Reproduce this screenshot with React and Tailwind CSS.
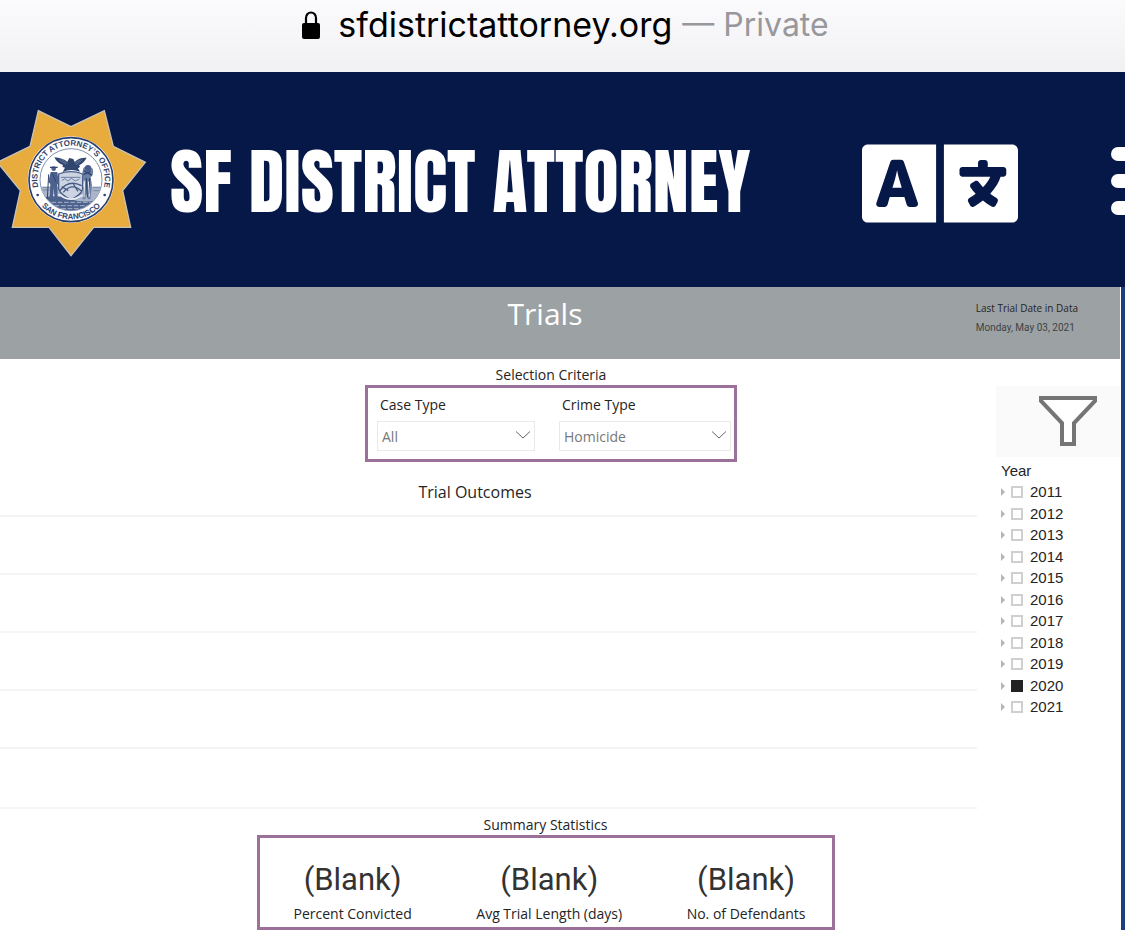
// App.jsx
import React, { useState } from "react";
import { FaLanguage } from "react-icons/fa";

const YEARS = [2011, 2012, 2013, 2014, 2015, 2016, 2017, 2018, 2019, 2020, 2021];

const STATS = ["Percent Convicted", "Avg Trial Length (days)", "No. of Defendants"];

const Badge = () => (
  <svg viewBox="0 36 444 456" className="mb-1 h-[152px] w-[148px] shrink-0" role="img" aria-label="District Attorney's Office, San Francisco">
    <defs>
      <path id="arcTop" d="M114 276 A101 101 0 1 1 312 276" />
      <path id="arcBottom" d="M102 298 A118 118 0 0 0 324 298" />
      <clipPath id="sealClip">
        <circle cx="213" cy="257" r="92" />
      </clipPath>
    </defs>
    <path
      d="M115 50 L213 98 L313 50 L340 157 L436 205 L368 290 L392 400 L281 400 L213 485 L147 400 L37 400 L61 290 L-8 205 L90 157 Z"
      fill="#e8ab3d"
      stroke="#c9c3b4"
      strokeWidth="4"
    />
    <circle cx="213" cy="257" r="130" fill="#fff" />
    <circle cx="213" cy="257" r="126" fill="none" stroke="#283e6f" strokeWidth="5" />
    <circle cx="213" cy="257" r="93" fill="#fff" stroke="#8290ad" strokeWidth="3" />
    <g fill="#31466f" fontFamily="'Liberation Sans', sans-serif" fontWeight="700" fontSize="24">
      <text textAnchor="middle">
        <textPath href="#arcTop" startOffset="50%">DISTRICT ATTORNEY’S OFFICE</textPath>
      </text>
      <text textAnchor="middle">
        <textPath href="#arcBottom" startOffset="50%">SAN FRANCISCO</textPath>
      </text>
    </g>
    <circle cx="113" cy="303" r="4" fill="#31466f" />
    <circle cx="314" cy="303" r="4" fill="#31466f" />
    <g clipPath="url(#sealClip)">
      {/* sea and ground */}
      <path d="M118 278 H308 V360 H118 Z" fill="#aab5ca" />
      <path d="M118 312 Q165 300 213 316 T308 310 V360 H118 Z" fill="#4c618c" />
      <path d="M135 325 H290 M145 335 H280 M165 344 H262" stroke="#a7b2c8" strokeWidth="3" strokeDasharray="14 5" />
      <path d="M128 280 H150 M128 288 H148 M278 280 H302 M280 290 H304" stroke="#5d7199" strokeWidth="2" />
      {/* shield */}
      <path d="M176 240 Q213 226 248 240 V285 Q242 305 213 316 Q184 305 176 285 Z" fill="#ccd4e1" stroke="#465b87" strokeWidth="4" />
      <path d="M183 250 H241 M186 260 l8 -6 l10 7 l10 -8 l12 8 l12 -6" stroke="#6c7fa5" strokeWidth="3" fill="none" />
      <path d="M180 290 Q205 255 245 275 M190 295 Q215 265 243 290 M185 278 l20 12 M220 270 l14 22" stroke="#465b87" strokeWidth="4" fill="none" />
      <path d="M160 304 Q180 298 190 310 Q215 322 238 308 Q255 300 265 308" stroke="#e9edf4" strokeWidth="5" fill="none" />
      {/* eagle */}
      <path d="M163 190 Q188 192 202 203 L208 192 L220 195 L224 204 Q236 190 260 191 Q252 207 237 214 Q244 219 234 223 L240 233 Q213 223 188 234 L195 221 Q184 219 189 213 Q171 207 163 190 Z" fill="#31466f" />
      <path d="M177 197 L198 211 M184 196 L202 209 M248 197 L228 212 M241 197 L225 208" stroke="#7f8fb0" strokeWidth="2" />
      {/* miner */}
      <circle cx="161" cy="224" r="7" fill="#4c618c" />
      <path d="M150 220 H173" stroke="#31466f" strokeWidth="4" />
      <path d="M152 234 H172 L177 270 L172 271 L173 316 H164 L161 280 L158 316 H149 L151 270 L145 264 Z" fill="#4c618c" />
      <path d="M146 241 L142 315 M157 238 L168 264" stroke="#31466f" strokeWidth="3" />
      {/* sailor with sheaf */}
      <path d="M250 222 Q264 206 278 224 Q283 240 272 250 L276 274 L271 316 H263 L261 280 L256 316 H248 L252 272 L248 252 Q245 236 250 222 Z" fill="#6c7fa5" />
      <circle cx="264" cy="222" r="9" fill="#465b87" />
      <path d="M252 230 L276 244 M250 242 L272 232 M259 252 L262 310 M269 252 L266 300" stroke="#31466f" strokeWidth="4" />
      <path d="M254 260 L252 310 M265 262 L268 308" stroke="#e9edf4" strokeWidth="3" />
    </g>
  </svg>
);

const Dropdown = ({ id, label, value, onChange, options, className }) => (
  <div className={className}>
    <label htmlFor={id} className="block pl-[3px] text-sm leading-5 text-[#252423]">
      {label}
    </label>
    <div className="relative mt-1.5">
      <select
        id={id}
        value={value}
        onChange={(e) => onChange(e.target.value)}
        className="block h-[30px] w-full appearance-none border border-[#eaeaea] bg-white pt-0.5 pl-1 text-sm leading-5 text-[#777]"
      >
        {options.map((o) => (
          <option key={o}>{o}</option>
        ))}
      </select>
      <svg viewBox="0 0 14 8" className="pointer-events-none absolute top-2.5 right-[5px] h-2 w-3.5" fill="none" stroke="#666" strokeWidth="1">
        <path d="M0 0.5 L7 7 L14 0.5" />
      </svg>
    </div>
  </div>
);

const App = () => {
  const [caseType, setCaseType] = useState("All");
  const [crimeType, setCrimeType] = useState("Homicide");
  const [selected, setSelected] = useState([2020]);

  const toggleYear = (year) => {
    setSelected(selected.includes(year) ? selected.filter((y) => y !== year) : [...selected, year]);
  };

  return (
    <div className="min-h-screen overflow-hidden bg-white font-['Open_Sans','Noto_Sans',sans-serif]">
      {/* Address bar */}
      <div className="flex h-[72px] items-start justify-center bg-gradient-to-b from-[#fbfbfd] to-[#f1f1f3] pt-1 pl-1.5 font-[Inter,'Liberation_Sans',sans-serif] text-[34px] leading-[42px]">
        <svg viewBox="0 0 18 28" className="mt-[7px] mr-[18px] h-7 w-[18px]">
          <path d="M4 13 V7 a5 5.5 0 0 1 10 0 V13" fill="none" stroke="#000" strokeWidth="2.2" />
          <rect x="0" y="12" width="18" height="16" rx="2" fill="#000" />
        </svg>
        <span className="text-black">sfdistrictattorney.org</span>
        <span className="ml-2.5 text-[32px] text-[#98989c]">— Private</span>
      </div>

      {/* Site header */}
      <header className="flex h-[215px] items-center bg-[#061848] pt-2">
        <Badge />
        <h1 className="mb-1 ml-[22px] whitespace-nowrap font-['Anton','Oswald','Liberation_Sans_Narrow',sans-serif] text-[72px] leading-none text-white">
          SF DISTRICT ATTORNEY
        </h1>
        <div className="ml-auto flex shrink-0 items-center">
          <button aria-label="Translate" className="text-white">
            <FaLanguage className="h-[125px] w-[156px]" />
          </button>
          <button aria-label="Menu" className="-mr-[60px] ml-[93px] flex w-[74px] flex-col gap-[13px] pb-1.5">
            <span className="h-3.5 rounded-full bg-white" />
            <span className="h-3.5 rounded-full bg-white" />
            <span className="h-3.5 rounded-full bg-white" />
          </button>
        </div>
      </header>

      {/* Report */}
      <div className="border-r-4 border-[#1f3f7c] pr-px">
        <div className="relative h-[72px] bg-[#9ca1a3]">
          <h2 className="pt-1.5 pr-[30px] text-center text-[30px] leading-[42px] text-white">Trials</h2>
          <div className="absolute top-[11px] right-[42px] text-[10px] leading-5">
            <p className="text-[#252423]">Last Trial Date in Data</p>
            <p className="font-[Roboto,sans-serif] text-[#3f4344]">Monday, May 03, 2021</p>
          </div>
        </div>

        <div className="flex">
          <main className="min-w-0 flex-1">
            <section className="flex flex-col items-center pt-1.5 pl-[106px]">
              <h3 className="text-sm leading-5 text-[#252423]">Selection Criteria</h3>
              <div className="flex h-[77px] w-[372px] justify-between border-[3px] border-[#9d7099] pt-[7px] pr-[3px] pl-[9px]">
                <Dropdown
                  id="caseType"
                  label="Case Type"
                  value={caseType}
                  onChange={setCaseType}
                  options={["All", "Felony", "Misdemeanor"]}
                  className="w-[158px]"
                />
                <Dropdown
                  id="crimeType"
                  label="Crime Type"
                  value={crimeType}
                  onChange={setCrimeType}
                  options={["All", "Homicide", "Robbery"]}
                  className="w-[172px]"
                />
              </div>
            </section>

            <section className="mr-[19px] pt-[18px]">
              <h3 className="pr-[27px] text-center text-base leading-6 text-[#252423]">Trial Outcomes</h3>
              <div className="mt-[11px] grid h-[294px] grid-rows-5 divide-y-2 divide-[#f4f4f4] border-y-2 border-[#f4f4f4]">
                {[0, 1, 2, 3, 4].map((i) => (
                  <div key={i} />
                ))}
              </div>
            </section>

            <section className="flex flex-col items-center pt-1.5 pl-[95px]">
              <h3 className="text-sm leading-5 text-[#252423]">Summary Statistics</h3>
              <dl className="flex h-[95px] w-[578px] justify-between border-[3px] border-[#9d7099] pt-[22px] pr-[26px] pl-[34px] text-center">
                {STATS.map((name) => (
                  <div key={name} className="flex flex-col-reverse justify-end">
                    <dt className="mt-1 whitespace-nowrap text-sm leading-5 text-[#252423]">{name}</dt>
                    <dd className="font-[Roboto,sans-serif] text-[31px] leading-10 text-[#333]">(Blank)</dd>
                  </div>
                ))}
              </dl>
            </section>
          </main>

          <aside className="w-[124px] pt-[27px] font-['Liberation_Sans',sans-serif] text-[#252423]">
            <button aria-label="Filters" className="flex h-[71px] w-full justify-center bg-[#fafafa] pt-2.5 pl-[19px]">
              <svg viewBox="0 0 58 51" className="h-[51px] w-[58px]" fill="#fff" stroke="#757575" strokeWidth="4">
                <path d="M2 2 H56 V5 L35 27 V48 H23 V27 L2 5 Z" />
              </svg>
            </button>
            <fieldset className="pl-[5px]">
              <legend className="pt-1 text-[15px] leading-5">Year</legend>
              {YEARS.map((year, i) => (
                <div key={year} className={i % 2 ? "flex h-[21px] items-center" : "flex h-[22px] items-center"}>
                  <button aria-label={`Expand ${year}`} className="mr-1.5">
                    <svg viewBox="0 0 4 8" className="h-2 w-1" fill="#b5b5b5">
                      <path d="M0 0 L4 4 L0 8 Z" />
                    </svg>
                  </button>
                  <input
                    id={`year-${year}`}
                    type="checkbox"
                    checked={selected.includes(year)}
                    onChange={() => toggleYear(year)}
                    className="size-3 appearance-none border-2 border-[#cfcfcf] checked:border-[#222] checked:bg-[#222]"
                  />
                  <label htmlFor={`year-${year}`} className="pl-[7px] text-[15px] leading-5">
                    {year}
                  </label>
                </div>
              ))}
            </fieldset>
          </aside>
        </div>
      </div>
    </div>
  );
};

export default App;
